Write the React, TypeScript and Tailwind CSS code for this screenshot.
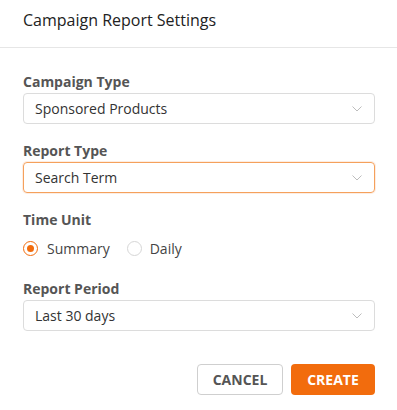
import React from "react";

function Chevron() {
  return (
    <svg width="10" height="6" viewBox="0 0 10 6" className="shrink-0">
      <path d="M0.5 0.5 L5 5 L9.5 0.5" fill="none" stroke="#bdbdbd" strokeWidth="1" />
    </svg>
  );
}

function Select({ value, focused }: { value: string; focused?: boolean }) {
  return (
    <div
      className={
        focused
          ? "flex h-[31px] items-center justify-between rounded-[4px] border border-[#f5a15c] pl-[11px] pr-[12px] shadow-[0_0_0_1px_rgba(242,108,13,0.12)]"
          : "flex h-[31px] items-center justify-between rounded-[4px] border border-[#dcdcdc] pl-[11px] pr-[12px]"
      }
    >
      <span className="text-[14px] text-[#333]">{value}</span>
      <Chevron />
    </div>
  );
}

function Label({ children, className }: { children: React.ReactNode; className: string }) {
  return <div className={"text-[14px] font-bold leading-[19px] text-[#555] " + className}>{children}</div>;
}

export default function App() {
  return (
    <div className="w-[397px] h-[410px] bg-white" style={{ fontFamily: '"Open Sans", sans-serif' }}>
      <div className="h-[48px] border-b border-[#e6e6e6] pl-[23px] pr-[22px] pt-[9px]">
        <h1 className="text-[16px] leading-[22px] text-[#222]">Campaign Report Settings</h1>
      </div>
      <div className="pl-[23px] pr-[22px] pt-[24px]">
        <Label className="">Campaign Type</Label>
        <div className="mt-[2px]">
          <Select value="Sponsored Products" />
        </div>
        <Label className="mt-[17px]">Report Type</Label>
        <div className="mt-[2px]">
          <Select value="Search Term" focused />
        </div>
        <Label className="mt-[17px]">Time Unit</Label>
        <div className="mt-[10px] flex h-[19px] items-center text-[14px] text-[#444]">
          <span className="flex h-[15px] w-[15px] items-center justify-center rounded-full border border-[#f26c0d]">
            <span className="h-[7px] w-[7px] rounded-full bg-[#f26c0d]" />
          </span>
          <span className="ml-[9px]">Summary</span>
          <span className="ml-[17px] h-[15px] w-[15px] rounded-full border border-[#d6d6d6]" />
          <span className="ml-[8px]">Daily</span>
        </div>
        <Label className="mt-[21px]">Report Period</Label>
        <div className="mt-[2px]">
          <Select value="Last 30 days" />
        </div>
        <div className="mt-[33px] flex justify-end gap-[8px]">
          <button className="h-[31px] w-[86px] rounded-[4px] border border-[#cfcfcf] bg-white text-[14px] font-bold text-[#555]">
            CANCEL
          </button>
          <button className="h-[31px] w-[84px] rounded-[4px] bg-[#f26c0d] text-[14px] font-bold text-white">
            CREATE
          </button>
        </div>
      </div>
    </div>
  );
}
